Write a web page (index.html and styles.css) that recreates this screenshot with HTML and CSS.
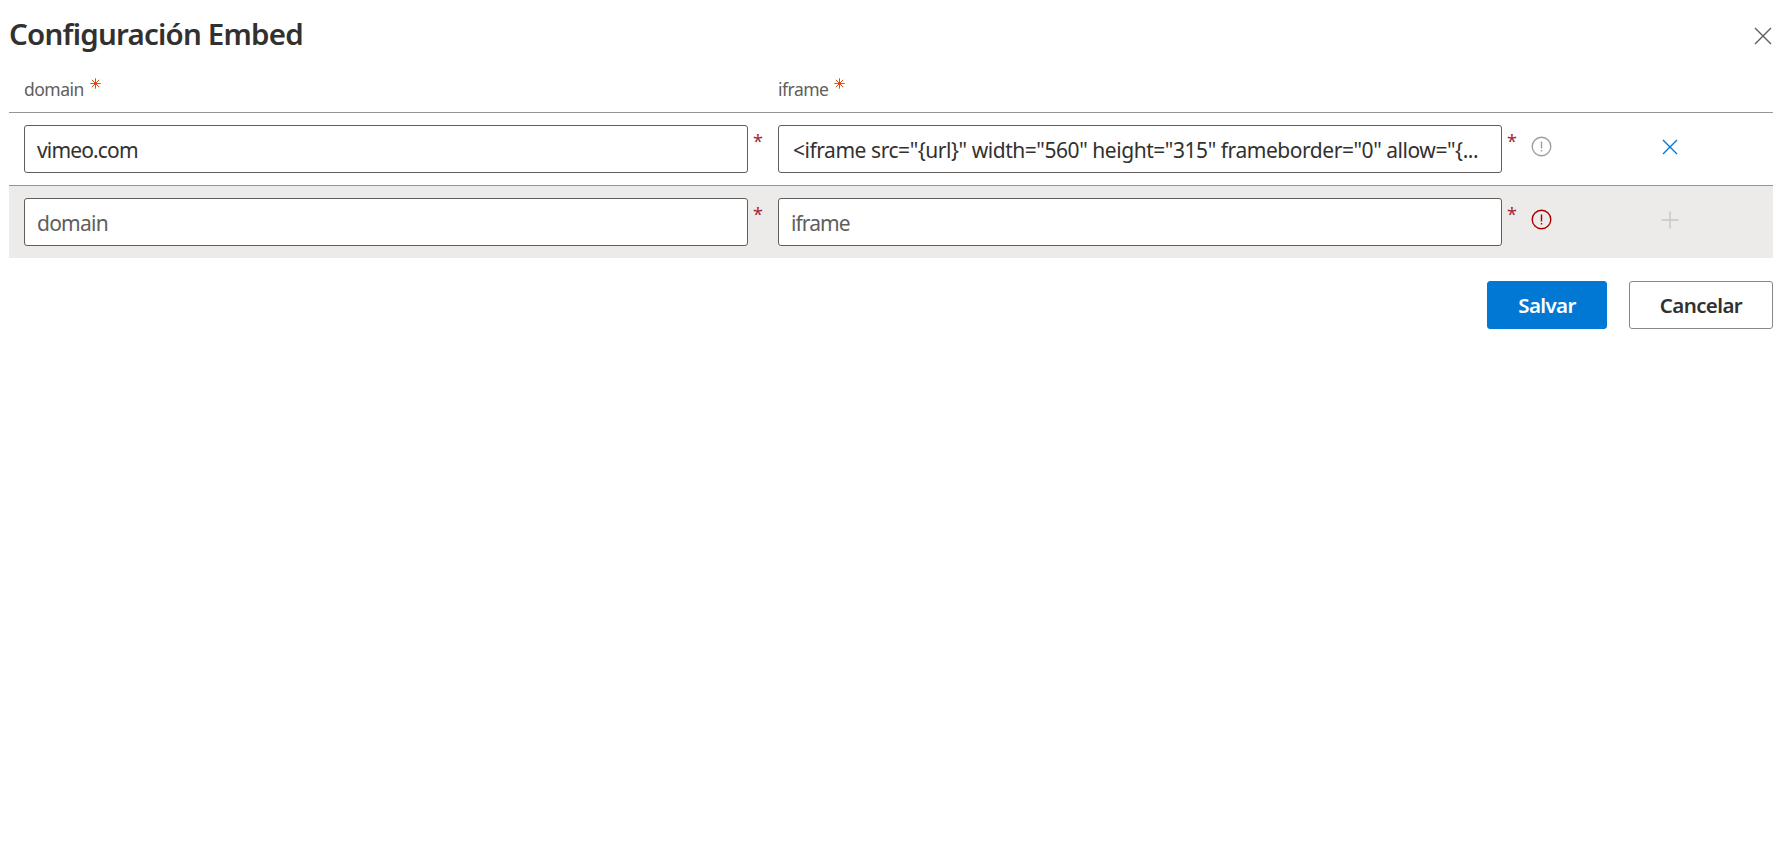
FILE: index.html
```
<!DOCTYPE html>
<html lang="es">
<head>
<meta charset="utf-8">
<title>Configuración Embed</title>
<link rel="stylesheet" href="styles.css">
</head>
<body>
<main class="panel">
  <header class="panel-header">
    <h1 class="title">Configuración Embed</h1>
    <button class="icon-button close" aria-label="Cerrar">
      <svg width="18" height="18" viewBox="0 0 18 18"><path d="M1 1L17 17M17 1L1 17"/></svg>
    </button>
  </header>
  <section class="grid">
    <div class="row head">
      <div class="label"><span class="label-domain">domain</span>
        <svg class="star" width="11" height="11" viewBox="0 0 11 11"><path d="M5.5 .3V10.7M.3 5.5H10.7M1.8 1.8L9.2 9.2M9.2 1.8L1.8 9.2"/></svg>
      </div>
      <div class="label"><span class="label-iframe">iframe</span>
        <svg class="star" width="11" height="11" viewBox="0 0 11 11"><path d="M5.5 .3V10.7M.3 5.5H10.7M1.8 1.8L9.2 9.2M9.2 1.8L1.8 9.2"/></svg>
      </div>
    </div>
    <div class="row">
      <div class="field"><div class="input"><span class="t-vimeo">vimeo.com</span></div><span class="required">*</span></div>
      <div class="field"><div class="input code"><span class="t-code">&lt;iframe src="{url}" width="560" height="315" frameborder="0" allow="{...</span></div><span class="required">*</span></div>
      <div class="status muted"><svg width="21" height="21" viewBox="0 0 21 21"><circle cx="10.5" cy="10.5" r="9.3"/><path d="M10.5 5.5V12.5M10.5 14V15.5"/></svg></div>
      <div class="action remove"><svg width="18" height="18" viewBox="0 0 18 18"><path d="M2 2L16 16M16 2L2 16"/></svg></div>
    </div>
    <div class="row new">
      <div class="field"><div class="input placeholder"><span class="t-domain">domain</span></div><span class="required">*</span></div>
      <div class="field"><div class="input placeholder"><span class="t-iframe">iframe</span></div><span class="required">*</span></div>
      <div class="status error"><svg width="21" height="21" viewBox="0 0 21 21"><circle cx="10.5" cy="10.5" r="9.3"/><path d="M10.5 5.5V12.5M10.5 14V15.5"/></svg></div>
      <div class="action add"><svg width="18" height="18" viewBox="0 0 18 18"><path d="M9 .5V17.5M.5 9H17.5"/></svg></div>
    </div>
  </section>
  <footer class="buttons">
    <button class="button primary">Salvar</button>
    <button class="button secondary">Cancelar</button>
  </footer>
</main>
</body>
</html>
```
FILE: styles.css
```
* { box-sizing: border-box; }
body { margin: 0; background: #fff; color: #323130; font-family: "Segoe UI", "Noto Sans", sans-serif; }
svg { display: block; fill: none; stroke: currentColor; }
.panel { padding: 0 19px 0 9px; }
.panel-header { display: flex; justify-content: space-between; height: 72px; }
.title { margin: 14px 0 0; font-size: 29.5px; font-weight: 600; line-height: 40px; letter-spacing: -.78px; }
.icon-button { border: 0; padding: 0; background: none; height: 18px; margin: 27px 1px 0 0; color: #605e5c; }
.close svg { stroke-width: 1.4; }
.row { display: grid; grid-template-columns: 754px 754px 128px 1fr; padding: 12px 0 12px 15px; height: 73px; border-bottom: 1px solid #979593; }
.row.head { height: 41px; padding-top: 5px; }
.row.new { height: 72px; background: #edebe9; border-bottom: 0; }
.label { display: flex; gap: 6px; font-size: 17.5px; line-height: 25px; color: #605e5c; }
.label-domain { letter-spacing: -.5px; }
.label-iframe { letter-spacing: -.5px; }
.star { margin-top: 1px; color: #d83b01; stroke-width: .9; }
.field { display: flex; gap: 5px; }
.input { width: 724px; height: 48px; padding: 0 12px; border: 1px solid #605e5c; border-radius: 3px; background: #fff; font-size: 21px; line-height: 49px; white-space: nowrap; }
.input.code { padding-left: 14px; }
.input.placeholder { color: #605e5c; }
.t-vimeo { letter-spacing: -.85px; }
.t-code { letter-spacing: -.45px; }
.t-domain { letter-spacing: -.75px; }
.t-iframe { letter-spacing: -.9px; }
.required { font-size: 18px; line-height: 32px; color: #a4262c; }
.status { margin-left: -1px; }
.status svg { margin-top: 11px; stroke-width: 1.4; }
.muted { color: #a19f9d; }
.error { color: #a80000; }
.action svg { margin: 13px 0 0 .5px; stroke-width: 1.4; }
.remove { color: #0078d4; }
.add { color: #c8c6c4; }
.buttons { display: flex; justify-content: flex-end; gap: 22px; padding-top: 23px; }
.button { height: 48px; padding: 0; border-radius: 3px; font: 600 20.5px/46px "Segoe UI", "Noto Sans", sans-serif; letter-spacing: -.6px; }
.primary { width: 120px; border: 1px solid #0078d4; background: #0078d4; color: #fff; }
.secondary { width: 144px; border: 1px solid #8a8886; background: #fff; color: #323130; }
```
